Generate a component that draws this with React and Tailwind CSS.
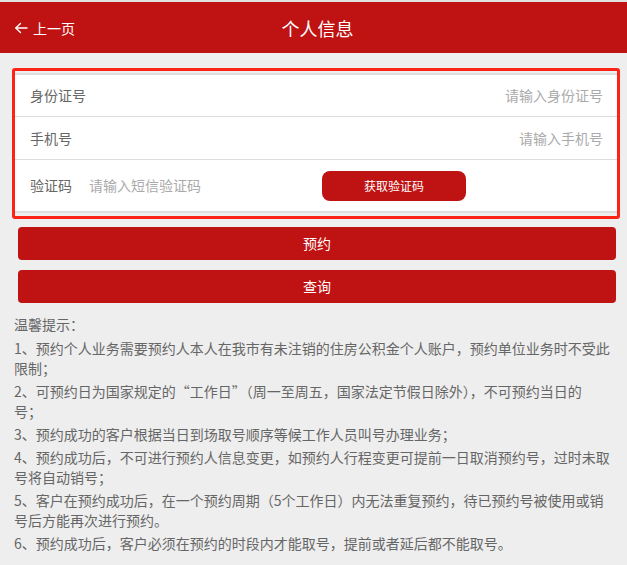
import React, { useState } from 'react';

const notes = [
  ['1、预约个人业务需要预约人本人在我市有未注销的住房公积金个人账户，预约单位业务时不受此限制；'],
  ['2、可预约日为国家规定的“工作日”（周一至周五，国家法定节假日除外），不可预约当日的', '号；'],
  ['3、预约成功的客户根据当日到场取号顺序等候工作人员叫号办理业务；'],
  ['4、预约成功后，不可进行预约人信息变更，如预约人行程变更可提前一日取消预约号，过时未取号将自动销号；'],
  ['5、客户在预约成功后，在一个预约周期（5个工作日）内无法重复预约，待已预约号被使用或销号后方能再次进行预约。'],
  ['6、预约成功后，客户必须在预约的时段内才能取号，提前或者延后都不能取号。'],
];

function BackArrow() {
  return (
    <svg width="14" height="14" viewBox="0 0 14 14" fill="none" stroke="currentColor" strokeWidth="1.4" strokeLinecap="round" strokeLinejoin="round">
      <path d="M6.5 2.5 L1.8 7 L6.5 11.5" />
      <path d="M2 7 H13" />
    </svg>
  );
}

export default function App() {
  const [form, setForm] = useState({ idCard: '', phone: '', code: '' });

  const update = (key) => (event) => setForm((prev) => ({ ...prev, [key]: event.target.value }));

  return (
    <div
      className="min-h-[565px] w-[627px] bg-[#eeeeee] pb-4"
      style={{ fontFamily: '"Noto Sans CJK SC", "Noto Sans", "Liberation Sans", sans-serif' }}
    >
      <header className="relative flex h-[53px] items-center border-t-2 border-[#e2e2e2] bg-[#bf1212] text-white">
        <button className="flex items-center gap-[5px] pl-[14px] text-[14px] leading-none">
          <BackArrow />
          <span>上一页</span>
        </button>
        <h1 className="absolute left-[8px] right-0 mx-auto w-fit text-[18px] font-normal leading-none">个人信息</h1>
      </header>

      <div className="ml-[12px] mt-[15px] w-[608px] rounded-[3px] border-[3px] border-[#fb2216] bg-[#eeeeee] pb-[3px] pt-[2px]">
        <div className="border-y-2 border-[#dddddd] bg-white">
          <div className="flex h-[42px] items-center border-b border-[#dddddd] pl-[15px] pr-[14px] text-[14px]">
            <span className="shrink-0 text-[#666666]">身份证号</span>
            <input
              className="min-w-0 flex-1 bg-transparent text-right text-[#333] outline-none placeholder:text-[#aaaaaa]"
              placeholder="请输入身份证号"
              value={form.idCard}
              onChange={update('idCard')}
            />
          </div>
          <div className="flex h-[43px] items-center border-b border-[#dddddd] pl-[15px] pr-[14px] text-[14px]">
            <span className="shrink-0 text-[#666666]">手机号</span>
            <input
              className="min-w-0 flex-1 bg-transparent text-right text-[#333] outline-none placeholder:text-[#aaaaaa]"
              placeholder="请输入手机号"
              value={form.phone}
              onChange={update('phone')}
            />
          </div>
          <div className="flex h-[51px] items-center pl-[15px] text-[14px]">
            <span className="w-[59px] shrink-0 text-[#666666]">验证码</span>
            <input
              className="w-[233px] bg-transparent text-[#333] outline-none placeholder:text-[#aaaaaa]"
              placeholder="请输入短信验证码"
              value={form.code}
              onChange={update('code')}
            />
            <button className="h-[30px] w-[144px] rounded-[8px] bg-[#bf1212] text-[12px] text-white">
              获取验证码
            </button>
          </div>
        </div>
      </div>

      <div className="ml-[18px] mt-[8px] flex w-[598px] flex-col gap-[10px]">
        <button className="h-[33px] rounded-[4px] bg-[#bf1212] text-[14px] text-white">预约</button>
        <button className="h-[33px] rounded-[4px] bg-[#bf1212] text-[14px] text-white">查询</button>
      </div>

      <div className="mt-[11px] pl-[14px] pr-[14px] text-[14px] leading-[20px] text-[#666666]">
        <p>温馨提示：</p>
        <div className="mt-[4px]">
          {notes.map((parts) => (
            <p key={parts[0]} className="mb-[3px]">
              {parts[0]}
              {parts[1] && (
                <>
                  <br />
                  {parts[1]}
                </>
              )}
            </p>
          ))}
        </div>
      </div>
    </div>
  );
}
